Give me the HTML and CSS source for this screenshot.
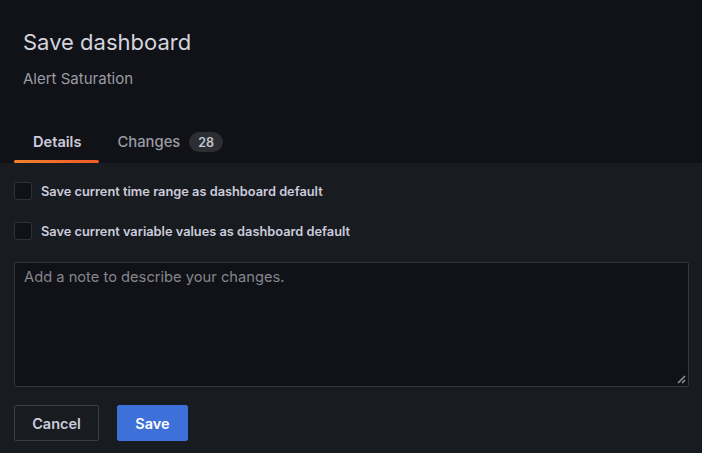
FILE: index.html
```html
<!DOCTYPE html>
<html>
<head>
<meta charset="utf-8">
<link rel="stylesheet" href="styles.css">
</head>
<body>
<div class="modal">
  <header class="head">
    <h1 class="title">Save dashboard</h1>
    <div class="subtitle">Alert Saturation</div>
    <nav class="tabs">
      <div class="tab active">Details</div>
      <div class="tab">Changes <span class="badge">28</span></div>
    </nav>
  </header>
  <section class="body">
    <label class="check"><span class="box"></span><span class="lbl">Save current time range as dashboard default</span></label>
    <label class="check"><span class="box"></span><span class="lbl">Save current variable values as dashboard default</span></label>
    <div class="area">
      <div class="placeholder">Add a note to describe your changes.</div>
      <svg class="grip" width="10" height="10" viewBox="0 0 10 10"><path d="M2 9 L9 2 M6 9 L9 6" stroke="#8e8e96" stroke-width="1.6" fill="none"/></svg>
    </div>
    <div class="actions">
      <button class="btn cancel">Cancel</button>
      <button class="btn save">Save</button>
    </div>
  </section>
</div>
</body>
</html>
```
FILE: styles.css
```css
html, body { margin: 0; padding: 0; }
body {
  width: 702px; height: 453px; overflow: hidden;
  background: #111217;
  font-family: Inter, "Noto Sans", sans-serif;
  color: #ccccdc;
}
.modal { display: flex; flex-direction: column; height: 453px; }
.head { padding: 28px 0 0 0; }
.title {
  margin: 0 0 0 23px;
  font-size: 22px; font-weight: 400; line-height: 28px;
  color: #d3d4de;
}
.subtitle {
  margin: 13px 0 0 23px;
  font-size: 15px; line-height: 20px;
  color: #9a9ba4;
}
.tabs { display: flex; margin: 38px 0 0 14px; }
.tab {
  position: relative;
  display: flex; align-items: center; gap: 9px;
  padding: 0 18px 6px 18px; height: 36px; box-sizing: border-box;
  font-size: 14.8px; font-weight: 500; color: #9a9ba4;
}
.tab.active {
  color: #ccccdc; font-weight: 600; font-size: 14.6px;
  padding: 0 18px 6px 19px;
}
.tab.active::after {
  content: ""; position: absolute; left: 0; right: 0; bottom: 0;
  height: 3.5px; border-radius: 2px;
  background: linear-gradient(90deg, #f3812e, #f05a28);
}
.badge {
  display: inline-flex; align-items: center; justify-content: center;
  background: #2d2e34; color: #c4c5cf;
  font-size: 12.5px; font-weight: 600;
  height: 20px; padding: 0 9px; border-radius: 10px;
}
.body {
  flex: 1;
  background: #181b1f;
  padding: 19px 13px 0 14px;
  display: flex; flex-direction: column;
}
.check { display: flex; align-items: center; gap: 9px; height: 18px; margin-bottom: 22px; }
.box {
  width: 16px; height: 16px;
  border: 1px solid #2e3036; border-radius: 2px;
  background: #111217;
}
.lbl { font-size: 12.8px; font-weight: 600; color: #ccccdc; }
.area {
  position: relative;
  height: 123px; margin-top: 0;
  border: 1px solid #34363c;
  background: #111217;
  border-radius: 2px;
}
.placeholder { padding: 4px 9px; font-size: 14.7px; line-height: 20px; color: #85868d; }
.grip { position: absolute; right: 2px; bottom: 2px; }
.actions { display: flex; gap: 18px; margin-top: 18px; }
.btn {
  height: 36px; font-family: inherit; font-size: 14.5px; font-weight: 600;
  border-radius: 2px; padding: 0 17px; cursor: pointer;
}
.cancel { background: transparent; border: 1px solid #3b3d44; color: #ccccdc; width: 85px; }
.save { background: #3d71d9; border: 1px solid #3d71d9; color: #fff; width: 71px; }
```
